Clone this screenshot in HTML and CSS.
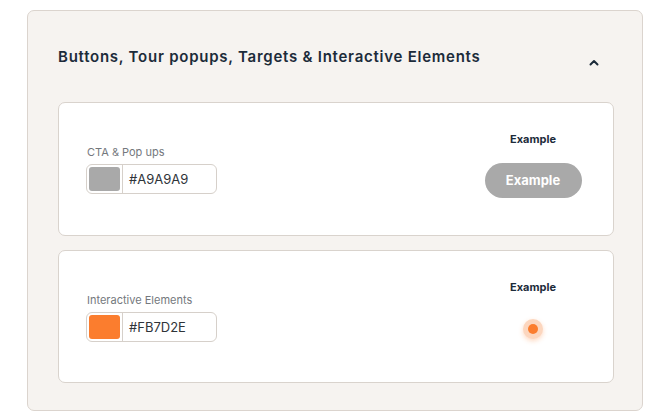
FILE: index.html
```html
<!DOCTYPE html>
<html>
    <head>
        <meta http-equiv="Content-Type" content="text/html; charset=utf-8"/>
        <link rel="stylesheet" href="styles.css">
    </head>
    <body>
        <div class="panel">
            <div class="panel-head">
                <div class="panel-title">Buttons, Tour popups, Targets &amp; Interactive Elements</div>
                <div class="chevron">
                    <svg width="12" height="8" viewBox="0 0 12 8">
                        <path d="M2.5 6.5 L6 3 L9.5 6.5" fill="none" stroke="#1c2b3a" stroke-width="2" stroke-linecap="round" stroke-linejoin="round"/>
                    </svg>
                </div>
            </div>

            <div class="card">
                <div class="field">
                    <div class="field-label">CTA &amp; Pop ups</div>
                    <div class="color-input">
                        <div class="swatch swatch-grey"></div>
                        <div class="hex">#A9A9A9</div>
                    </div>
                </div>
                <div class="preview">
                    <div class="preview-label">Example</div>
                    <div class="preview-box">
                        <div class="cta-btn">Example</div>
                    </div>
                </div>
            </div>

            <div class="card">
                <div class="field">
                    <div class="field-label">Interactive Elements</div>
                    <div class="color-input">
                        <div class="swatch swatch-orange"></div>
                        <div class="hex">#FB7D2E</div>
                    </div>
                </div>
                <div class="preview">
                    <div class="preview-label">Example</div>
                    <div class="preview-box">
                        <div class="beacon"><div class="beacon-dot"></div></div>
                    </div>
                </div>
            </div>
        </div>
    </body>
</html>
```

FILE: styles.css
```css
body {
    margin: 0;
    background-color: #ffffff;
    font-family: Inter, "Noto Sans", sans-serif;
}

.panel {
    box-sizing: border-box;
    width: 616px;
    margin: 10px 0 0 27px;
    padding: 0 28px 27px 30px;
    background-color: #f6f3f0;
    border: 1px solid #dbd4ce;
    border-radius: 7px;
}

.panel-head {
    display: flex;
    align-items: center;
    justify-content: space-between;
    height: 91px;
}

.panel-title {
    font-size: 15px;
    font-weight: 600;
    color: #1c2b3a;
    letter-spacing: 0.75px;
}

.chevron {
    width: 12px;
    height: 8px;
    margin-top: 11px;
    margin-right: 14px;
    display: flex;
}

.card {
    box-sizing: border-box;
    height: 134px;
    display: flex;
    justify-content: space-between;
    align-items: flex-start;
    padding: 0 20px 0 27px;
    background-color: #ffffff;
    border: 1px solid #d9d3cd;
    border-radius: 7px;
}

.card + .card {
    height: 133px;
    margin-top: 14px;
}

.field {
    align-self: center;
    display: flex;
    flex-direction: column;
    gap: 4px;
}

.field-label {
    font-size: 11px;
    line-height: 16px;
    color: #74787d;
    padding-left: 1px;
}

.color-input {
    box-sizing: border-box;
    width: 131px;
    height: 30px;
    display: flex;
    align-items: center;
    background-color: #ffffff;
    border: 1px solid #d6d0ca;
    border-radius: 6px;
    padding-left: 2px;
}

.swatch {
    width: 31px;
    height: 24px;
    border-radius: 3px;
}

.swatch-grey {
    background-color: #a9a9a9;
}

.swatch-orange {
    background-color: #fb7d2e;
}

.hex {
    height: 28px;
    line-height: 28px;
    margin-left: 2px;
    padding-left: 6px;
    border-left: 1px solid #d6d0ca;
    font-size: 13px;
    color: #2f3439;
}

.preview {
    width: 120px;
    margin-top: 28px;
    display: flex;
    flex-direction: column;
    align-items: center;
    gap: 16px;
}

.preview-label {
    font-size: 11px;
    line-height: 16px;
    font-weight: 700;
    color: #1c2b3a;
}

.preview-box {
    height: 35px;
    display: flex;
    align-items: center;
    justify-content: center;
}

.cta-btn {
    width: 97px;
    height: 35px;
    line-height: 35px;
    text-align: center;
    border-radius: 18px;
    background-color: #a9a9a9;
    color: #ffffff;
    font-size: 13px;
    font-weight: 700;
}

.beacon {
    width: 20px;
    height: 20px;
    border-radius: 50%;
    background-color: #fcd6be;
    box-shadow: 0 2px 5px rgba(251, 125, 46, 0.3);
    display: flex;
    align-items: center;
    justify-content: center;
}

.beacon-dot {
    width: 10px;
    height: 10px;
    border-radius: 50%;
    background-color: #fb7d2e;
}
```
